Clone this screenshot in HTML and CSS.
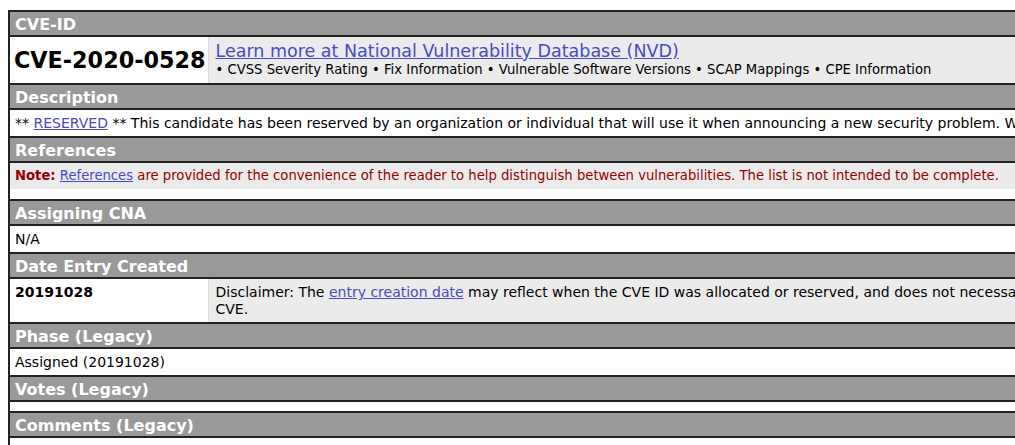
FILE: index.html
```
<!DOCTYPE html>
<html>
<head>
<meta charset="utf-8">
<link rel="stylesheet" href="styles.css">
</head>
<body>
<div class="wrap">
<table class="cve">
  <colgroup><col class="c1"><col class="c2"></colgroup>
  <tr><th colspan="2">CVE-ID</th></tr>
  <tr class="idrow">
    <td class="idcell"><span class="cveid">CVE-2020-0528</span></td>
    <td class="nvd"><a class="nvdlink" href="#">Learn more at National Vulnerability Database (NVD)</a><br><span class="bul">• CVSS Severity Rating • Fix Information • Vulnerable Software Versions • SCAP Mappings • CPE Information</span></td>
  </tr>
  <tr><th colspan="2">Description</th></tr>
  <tr><td colspan="2" class="plain nowrap">** <a href="#">RESERVED</a> ** This candidate has been reserved by an organization or individual that will use it when announcing a new security problem. When the candidate has been publicized, the details for this candidate will be provided.</td></tr>
  <tr><th colspan="2">References</th></tr>
  <tr><td colspan="2" class="note nowrap"><b>Note:</b> <a href="#">References</a> are provided for the convenience of the reader to help distinguish between vulnerabilities. The list is not intended to be complete.</td></tr>
  <tr><td colspan="2" class="gap"></td></tr>
  <tr><th colspan="2">Assigning CNA</th></tr>
  <tr><td colspan="2" class="plain">N/A</td></tr>
  <tr><th colspan="2">Date Entry Created</th></tr>
  <tr class="daterow">
    <td class="datecell"><b>20191028</b></td>
    <td class="disc nowrap">Disclaimer: The <a href="#">entry creation date</a> may reflect when the CVE ID was allocated or reserved, and does not necessarily indicate when this vulnerability was discovered, shared with the affected vendor, publicly disclosed, or updated in<br>CVE.</td>
  </tr>
  <tr><th colspan="2">Phase (Legacy)</th></tr>
  <tr><td colspan="2" class="plain">Assigned (20191028)</td></tr>
  <tr><th colspan="2">Votes (Legacy)</th></tr>
  <tr><td colspan="2" class="empty"></td></tr>
  <tr><th colspan="2">Comments (Legacy)</th></tr>
  <tr><td colspan="2" class="plain">&nbsp;</td></tr>
</table>
</div>
</body>
</html>
```
FILE: styles.css
```
html, body {
  overflow: hidden;
}
body {
  margin: 10px 0 0 8px;
  background: #fff;
  font-family: "DejaVu Sans", Verdana, sans-serif;
  font-size: 14px;
  color: #000;
}
.wrap {
  width: 1400px;
}
.cve {
  border-collapse: collapse;
  border: 2px solid #222;
  width: 1400px;
  table-layout: fixed;
}
.c1 {
  width: 199px;
}
.cve th {
  background: #999;
  color: #fff;
  font-weight: bold;
  font-size: 16px;
  text-align: left;
  padding: 3px 5px 0;
  height: 20px;
  line-height: 20px;
  border-top: 2px solid #222;
  border-bottom: 2px solid #222;
}
.cve td {
  padding: 0 5px;
  vertical-align: top;
  border-bottom: 2px solid #222;
}
.cve a {
  color: #4a4ac4;
}
.nowrap {
  white-space: nowrap;
}
.idcell {
  background: #fff;
  vertical-align: middle !important;
  border-right: 1px solid #ddd;
  height: 46px;
  white-space: nowrap;
  padding: 0 4px !important;
}
.cveid {
  font-size: 22.3px;
  font-weight: bold;
}
.nvd {
  background: #ebebeb;
  padding: 5px 7px 0 !important;
  vertical-align: top;
  white-space: nowrap;
  line-height: 17px;
}
.nvdlink {
  font-size: 17.5px;
  line-height: 19px;
}
.bul {
  font-size: 13.2px;
}
.plain {
  height: 26px;
  line-height: 26px;
}
.note {
  background: #ebebeb;
  color: #990000;
  font-size: 13.2px;
  height: 26px;
  line-height: 26px;
  border-bottom: none !important;
}
.gap {
  height: 10px;
}
.datecell {
  height: 38px;
  padding-top: 5px !important;
  border-right: 1px solid #ddd;
  line-height: 17px;
}
.disc {
  background: #ebebeb;
  padding: 5px 7px 0 !important;
  line-height: 17px;
}
.empty {
  height: 9px;
}
```
